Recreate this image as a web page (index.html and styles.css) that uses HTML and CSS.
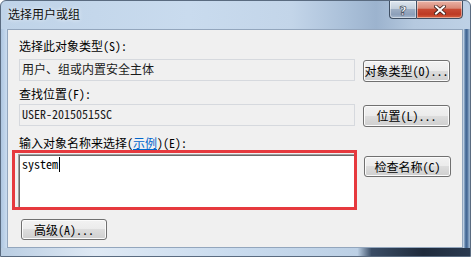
FILE: index.html
```html
<!DOCTYPE html>
<html lang="zh-CN">
<head>
<meta charset="utf-8">
<title>选择用户或组</title>
<link rel="stylesheet" href="styles.css">
</head>
<body>
<div class="window">
  <div class="titlebar">
    <div class="title">选择用户或组</div>
    <div class="caption-btns">
      <div class="cbtn help"><span class="q">?</span></div>
      <div class="cbtn close">
        <svg width="12" height="10" viewBox="0 0 12 10">
          <path d="M2 1.5 L10 8.5 M10 1.5 L2 8.5" stroke="#3a1d18" stroke-width="3.6" stroke-linecap="square"/>
          <path d="M2 1.5 L10 8.5 M10 1.5 L2 8.5" stroke="#ffffff" stroke-width="2" stroke-linecap="square"/>
        </svg>
      </div>
    </div>
  </div>
  <div class="middle">
    <div class="frame-left"></div>
    <div class="client">
      <div class="lbl l1">选择此对象类型(S):</div>
      <div class="row r1">
        <div class="field">用户、组或内置安全主体</div>
        <div class="btn">对象类型(O)...</div>
      </div>
      <div class="lbl l2">查找位置(F):</div>
      <div class="row r2">
        <div class="field">USER-20150515SC</div>
        <div class="btn">位置(L)...</div>
      </div>
      <div class="lbl l3">输入对象名称来选择(<span class="link">示例</span>)(E):</div>
      <div class="row r3">
        <div class="edit">system<span class="caret"></span><div class="mark"></div></div>
        <div class="btn b3">检查名称(C)</div>
      </div>
      <div class="btn adv">高级(A)...</div>
    </div>
    <div class="frame-right"></div>
  </div>
  <div class="frame-bottom"></div>
</div>
</body>
</html>
```
FILE: styles.css
```css
html, body {
  margin: 0;
  padding: 0;
  background: #ffffff;
}

.window {
  width: 471px;
  height: 257px;
  box-sizing: border-box;
  display: flex;
  flex-direction: column;
  border: 1px solid #5a6b80;
  border-radius: 6px 6px 0 0;
  overflow: hidden;
  background: linear-gradient(90deg, #bfd3e8 0%, #c9dbee 40%, #c3d5e9 62%, #a9bfd8 74%, #9cb3ce 80%, #b5c9df 88%, #bed1e6 100%);
  font-family: "Noto Sans CJK SC", "Noto Sans", sans-serif;
  font-size: 12px;
  font-feature-settings: "hwid" 1;
  color: #000;
}

.titlebar {
  height: 28px;
  display: flex;
  align-items: flex-start;
  padding: 0 7px 0 7px;
}

.title {
  margin-top: 6px;
  line-height: 14px;
  color: #101010;
  text-shadow: 0 0 4px rgba(255,255,255,0.9);
}

.caption-btns {
  margin-left: auto;
  display: flex;
  margin-top: -1px;
}

.cbtn {
  height: 19px;
  box-sizing: border-box;
  display: flex;
  align-items: center;
  justify-content: center;
  border: 1px solid #3f4f63;
  box-shadow: inset 0 0 0 1px rgba(255,255,255,0.45);
}

.help {
  width: 27px;
  border-right: none;
  border-radius: 0 0 0 4px;
  background: linear-gradient(#dfe7f0 0%, #c3cfdc 45%, #9daec4 50%, #8c9fb9 80%, #a9bbd0 100%);
}

.q {
  font-family: "DejaVu Sans", sans-serif;
  font-weight: bold;
  font-size: 13px;
  line-height: 13px;
  color: #ffffff;
  -webkit-text-stroke: 0.6px #2d3a4a;
  margin-top: 1px;
}

.close {
  width: 47px;
  border-radius: 0 0 4px 0;
  background: linear-gradient(#eab3a6 0%, #d98a78 42%, #c74a33 50%, #bd3a24 78%, #d8623f 100%);
}

.middle {
  height: 219px;
  display: flex;
}

.frame-left {
  width: 6px;
  background: linear-gradient(90deg, #aec6e0 0%, #bcd1e8 50%, #cadcef 100%);
}

.frame-right {
  flex: 1;
  background: linear-gradient(90deg, #d0deec 0px, #a9c0d9 1px, #5c7fa8 2px, #3f6290 4px, #6d8db2 5px, #a2b9d2 7px);
}

.frame-bottom {
  flex: 1;
  background: linear-gradient(90deg, #b9cde2 0%, #dfe9f4 20%, #c9dbee 50%, #bcd0e5 76%, #3a4d66 79%, #1f2b3c 90%, #2a3a50 100%);
}

.client {
  width: 456px;
  height: 219px;
  box-sizing: border-box;
  border: 1px solid #93a6bd;
  background: #f0f0f0;
  padding: 9px 0 0 11px;
}

.lbl {
  line-height: 14px;
  height: 14px;
  white-space: nowrap;
}

.link {
  color: #0066cc;
  text-decoration: underline;
}

.l2 { margin-top: 5px; }
.l3 { margin-top: 9px; }

.row {
  display: flex;
  align-items: flex-start;
  gap: 8px;
}

.r1 { margin-top: 6px; }
.r2 { margin-top: 3px; }
.r3 { margin-top: 4px; }

.field {
  width: 336px;
  height: 22px;
  box-sizing: border-box;
  border: 1px solid #d6d9de;
  background: #f0f0f0;
  padding: 0 2px;
  line-height: 18px;
  color: #1a1a1a;
  white-space: nowrap;
}

.btn {
  width: 87px;
  height: 22px;
  box-sizing: border-box;
  margin-top: 1px;
  display: flex;
  align-items: center;
  justify-content: center;
  border: 1px solid #707070;
  border-radius: 3px;
  background: linear-gradient(#f2f2f2 0%, #ebebeb 50%, #dddddd 50%, #cfcfcf 100%);
  box-shadow: inset 0 0 0 1px #fbfbfb;
  line-height: 14px;
  white-space: nowrap;
}

.b3 {
  height: 21px;
  margin-top: 2px;
}

.edit {
  position: relative;
  margin-left: -1px;
  width: 338px;
  height: 54px;
  box-sizing: border-box;
  border-top: 1px solid #a0a0a0;
  border-left: 1px solid #a0a0a0;
  border-right: 1px solid #e3e3e3;
  border-bottom: 1px solid #e3e3e3;
  box-shadow: inset 1px 1px 0 #696969;
  background: #ffffff;
  padding: 2px 3px;
  line-height: 14px;
  color: #000;
}

.caret {
  display: inline-block;
  width: 1px;
  height: 15px;
  background: #000;
  vertical-align: -3px;
  margin-left: 1px;
}

.mark {
  position: absolute;
  left: -7px;
  top: -5px;
  width: 345px;
  height: 60px;
  box-sizing: border-box;
  border: 3px solid #e6393e;
  pointer-events: none;
}

.adv {
  width: 86px;
  height: 21px;
  margin-top: 11px;
  margin-left: 2px;
}
```
